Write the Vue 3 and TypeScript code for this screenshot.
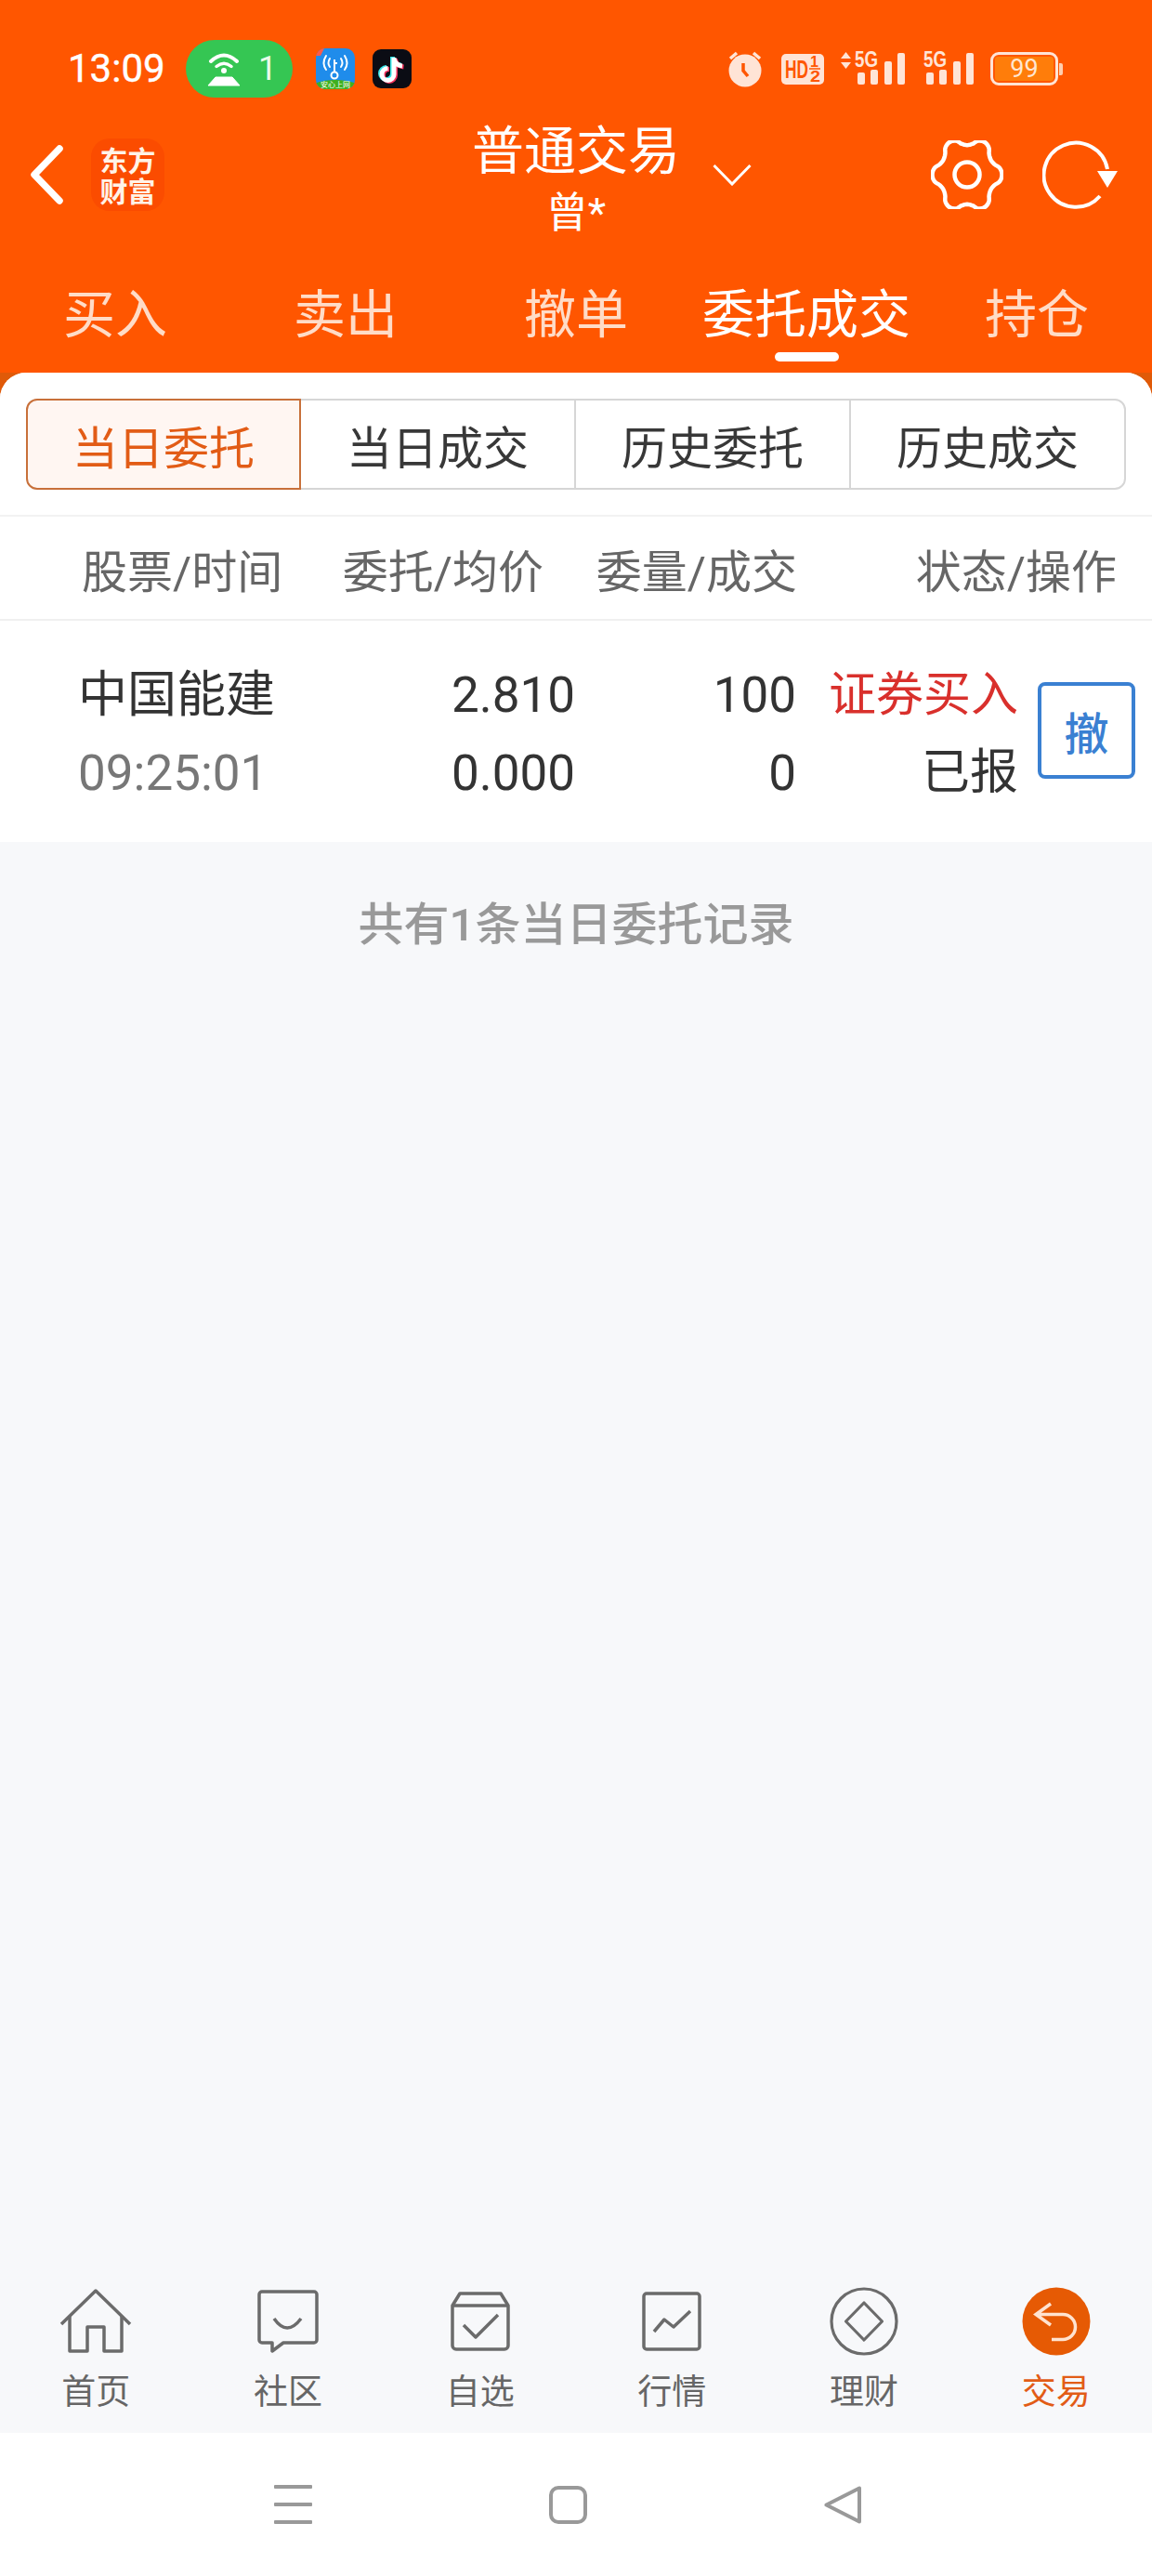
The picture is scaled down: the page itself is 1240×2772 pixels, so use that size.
<script setup lang="ts">
const topTabs = [
  { label: '买入', active: false },
  { label: '卖出', active: false },
  { label: '撤单', active: false },
  { label: '委托成交', active: true },
  { label: '持仓', active: false },
]
const segments = ['当日委托', '当日成交', '历史委托', '历史成交']
const columns = ['股票/时间', '委托/均价', '委量/成交', '状态/操作']
const bottomTabs = [
  { key: 'home', label: '首页' },
  { key: 'community', label: '社区' },
  { key: 'watch', label: '自选' },
  { key: 'market', label: '行情' },
  { key: 'wealth', label: '理财' },
  { key: 'trade', label: '交易' },
]
const signalBars = [
  { x: 3, y: 23 },
  { x: 17, y: 20 },
  { x: 32, y: 11 },
  { x: 46, y: 2 },
]

// six soft lobes, wider than a plain cosine so it reads like the app's gear
function gearPath(): string {
  const points: string[] = []
  for (let i = 0; i < 144; i++) {
    const a = (i / 144) * Math.PI * 2
    const c = Math.cos(6 * a)
    const r = 33.5 + 4 * Math.sign(c) * Math.pow(Math.abs(c), 0.7)
    points.push(`${(39 + r * Math.cos(a)).toFixed(2)} ${(37 + r * 1.08 * Math.sin(a)).toFixed(2)}`)
  }
  return `M${points.join('L')}Z`
}
const gear = gearPath()
</script>

<template>
  <div class="phone">
    <header class="head">
      <div class="statusbar">
        <span class="time">13:09</span>
        <span class="hotspot">
          <svg width="36" height="37" viewBox="0 0 36 37" fill="none">
            <path d="M4 10Q18-3 32 10" stroke="#fff" stroke-width="4" stroke-linecap="round" />
            <path d="M10 15.500Q18 9 26 15.500" stroke="#fff" stroke-width="3.500" stroke-linecap="round" />
            <circle cx="18" cy="20" r="3" fill="#fff" />
            <path d="M9 27H27L35 36H1Z" fill="#fff" stroke="#fff" stroke-linejoin="round" />
          </svg>
          <span class="hotspot-num">1</span>
        </span>
        <svg class="app-wifi" width="42" height="44" viewBox="0 0 42 44" fill="none">
          <defs>
            <clipPath id="appclip"><rect width="42" height="44" rx="10" /></clipPath>
          </defs>
          <g clip-path="url(#appclip)">
            <rect width="42" height="44" fill="#1f8ceb" />
            <ellipse cx="21" cy="44" rx="28" ry="10" fill="#3fb01e" />
            <path d="M0 0H9L5 8H0Z" fill="#ff5a4a" />
          </g>
          <path d="M11 8Q6 16 11 23M31 8Q36 16 31 23M15 11Q12 16 15 20M27 11Q30 16 27 20" stroke="#fff" stroke-width="2" stroke-linecap="round" />
          <circle cx="20" cy="29" r="3.500" stroke="#fff" stroke-width="2" />
          <path d="M20 25V12M20 16H23" stroke="#fff" stroke-width="2" />
          <text x="21" y="42" text-anchor="middle" class="app-wifi-text">安心上网</text>
        </svg>
        <svg class="tiktok" width="42" height="42" viewBox="0 0 42 42" fill="none">
          <rect width="42" height="42" rx="9" fill="#0b0c14" />
          <g stroke-width="5">
            <path d="M21.500 8V26A6.500 6.500 0 1 1 15 19.500M21.500 9C22.500 13.500 25.500 16.500 30.500 17" stroke="#35e3e6" />
            <path d="M24.500 10V28A6.500 6.500 0 1 1 18 21.500M24.500 11C25.500 15.500 28.500 18.500 33.500 19" stroke="#f5325d" />
            <path d="M23 9V27A6.500 6.500 0 1 1 16.500 20.500M23 10C24 14.500 27 17.500 32 18" stroke="#fff" />
          </g>
        </svg>

        <div class="status-right">
          <svg width="38" height="39" viewBox="0 0 38 39" fill="none">
            <circle cx="19" cy="21" r="17.500" fill="#ffe4d6" />
            <path d="M3 8L10 2M35 8L28 2" stroke="#ffe4d6" stroke-width="3.500" />
            <path d="M17 13V21L22 27" stroke="#ff5600" stroke-width="3.500" />
          </svg>
          <svg class="hd" width="46" height="33" viewBox="0 0 46 33">
            <rect width="46" height="33" rx="5" fill="#ffe4d6" />
            <text x="4" y="26" textLength="25" lengthAdjust="spacingAndGlyphs" class="hd-big">HD</text>
            <text x="31" y="14" textLength="9" lengthAdjust="spacingAndGlyphs" class="hd-small">1</text>
            <text x="31" y="30" textLength="11" lengthAdjust="spacingAndGlyphs" class="hd-small">2</text>
            <path d="M30 16H42" stroke="#ff5600" stroke-width="1.500" />
          </svg>
          <svg class="updown" width="11" height="18" viewBox="0 0 11 18">
            <path d="M5.500 0L11 7H0ZM5.500 18L0 11H11Z" fill="#ffe4d6" />
          </svg>
          <svg v-for="n in 2" :key="n" class="signal" :class="{ 'signal--second': n === 2 }" width="54" height="37" viewBox="0 0 54 37">
            <text x="0" y="17" textLength="25" lengthAdjust="spacingAndGlyphs" class="sig-text">5G</text>
            <rect v-for="bar in signalBars" :key="bar.x" :x="bar.x" :y="bar.y" width="8" :height="36 - bar.y" rx="2" fill="#ffe4d6" />
          </svg>
          <div class="battery">
            <div class="battery-fill">99</div>
          </div>
          <div class="battery-tip"></div>
        </div>
      </div>

      <div class="topbar">
        <div class="top-left">
          <svg width="36" height="64" viewBox="0 0 36 64" fill="none">
            <path d="M32 4L5 32L32 60" stroke="#fff" stroke-width="7.500" stroke-linecap="round" stroke-linejoin="round" />
          </svg>
          <div class="logo">东方<br />财富</div>
        </div>
        <div class="top-title">
          <div class="title">普通交易</div>
          <div class="subtitle">曾*</div>
        </div>
        <div class="top-right">
          <svg class="caret" width="42" height="24" viewBox="0 0 42 24" fill="none">
            <path d="M1.500 2L21 22L40.500 2" stroke="#fff" stroke-width="3" />
          </svg>
          <svg class="gear" width="78" height="74" viewBox="0 0 78 74" fill="none">
            <path :d="gear" stroke="#fff" stroke-width="4.500" stroke-linejoin="round" />
            <circle cx="39" cy="37" r="13.500" stroke="#fff" stroke-width="4.500" />
          </svg>
          <svg class="refresh" width="82" height="74" viewBox="0 0 82 74" fill="none">
            <path d="M62 60A34.500 34.500 0 1 1 70 31" stroke="#fff" stroke-width="4" />
            <path d="M59 33H81L70 51Z" fill="#fff" />
          </svg>
        </div>
      </div>

      <nav class="tabs">
        <div v-for="tab in topTabs" :key="tab.label" class="tab" :class="{ 'tab--active': tab.active }">
          <div class="tab-label">{{ tab.label }}</div>
          <div v-if="tab.active" class="tab-bar"></div>
        </div>
      </nav>
    </header>

    <main class="panel">
      <div class="seg-wrap">
        <div class="seg">
          <div v-for="(seg, i) in segments" :key="seg" class="seg-item" :class="{ 'seg-item--active': i === 0 }">{{ seg }}</div>
        </div>
      </div>

      <div class="thead">
        <div v-for="col in columns" :key="col" class="thead-cell">{{ col }}</div>
      </div>

      <div class="row">
        <div class="cell cell--name">中国能建</div>
        <div class="cell">2.810</div>
        <div class="cell">100</div>
        <div class="cell cell--buy">证券买入</div>
        <button type="button" class="cancel">撤</button>
        <div class="cell cell--time">09:25:01</div>
        <div class="cell">0.000</div>
        <div class="cell">0</div>
        <div class="cell cell--state">已报</div>
      </div>

      <p class="note">共有1条当日委托记录</p>

      <div class="tabbar">
        <div v-for="item in bottomTabs" :key="item.key" class="tabbar-item" :class="{ 'tabbar-item--active': item.key === 'trade' }">
          <div class="tabbar-icon">
            <svg v-if="item.key === 'home'" width="78" height="70" viewBox="0 0 78 70" fill="none" stroke="#6b6b6b" stroke-width="3.500" stroke-linejoin="round">
              <path d="M2 38L39 2L76 38" />
              <path d="M11 29V67H30V41H48V67H67V29" />
            </svg>
            <svg v-else-if="item.key === 'community'" width="66" height="68" viewBox="0 0 66 68" fill="none" stroke="#6b6b6b" stroke-width="3.500" stroke-linejoin="round">
              <path d="M5 2H61A3 3 0 0 1 64 5V54A3 3 0 0 1 61 57H28L16 66V57H5A3 3 0 0 1 2 54V5A3 3 0 0 1 5 2Z" />
              <path d="M18 31Q32 51 47 31" />
            </svg>
            <svg v-else-if="item.key === 'watch'" width="64" height="64" viewBox="0 0 64 64" fill="none" stroke="#6b6b6b" stroke-width="3.500" stroke-linejoin="round">
              <path d="M2 15L10 2H54L62 15V58A4 4 0 0 1 58 62H6A4 4 0 0 1 2 58Z" />
              <path d="M2 15H62" />
              <path d="M14 36L27 49L51 25" />
            </svg>
            <svg v-else-if="item.key === 'market'" width="64" height="64" viewBox="0 0 64 64" fill="none" stroke="#6b6b6b" stroke-width="3.500" stroke-linejoin="round">
              <rect x="2" y="2" width="60" height="60" rx="3" />
              <path d="M13 43L24 30L34 38L52 21" />
            </svg>
            <svg v-else-if="item.key === 'wealth'" width="74" height="74" viewBox="0 0 74 74" fill="none" stroke="#6b6b6b" stroke-width="3.200" stroke-linejoin="round">
              <circle cx="37" cy="37" r="35" />
              <path d="M37 17L56.500 37L37 57L17.500 37Z" />
            </svg>
            <svg v-else width="74" height="74" viewBox="0 0 74 74" fill="none" stroke="#ffe3d0" stroke-width="3.500">
              <circle cx="37" cy="37" r="36.500" fill="#e65a04" stroke="none" />
              <path d="M31 18L15 29.500L31 41M15 29.500H44A13.500 13.500 0 0 1 44 56.500H32" />
            </svg>
          </div>
          <div class="tabbar-label">{{ item.label }}</div>
        </div>
      </div>
    </main>

    <footer class="navbar">
      <div class="nav-menu"><span></span><span></span><span></span></div>
      <div class="nav-home"></div>
      <svg width="40" height="41" viewBox="0 0 40 41" fill="none">
        <path d="M38 2.500V38.500L2.500 20.500Z" stroke="#999" stroke-width="4" stroke-linejoin="round" />
      </svg>
    </footer>
  </div>
</template>

<style>
html,
body {
  margin: 0;
  background: #f7f8fa;
}
</style>

<style scoped>
.phone {
  width: 1240px;
  height: 2772px;
  display: flex;
  flex-direction: column;
  overflow: hidden;
  font-family: Roboto, "Noto Sans CJK SC", sans-serif;
  background: #e05a08;
}

.head {
  background: #ff5600;
  flex: 0 0 auto;
}

.statusbar {
  height: 130px;
  box-sizing: border-box;
  padding: 18px 0 0 73px;
  display: flex;
  align-items: center;
}

.time {
  width: 127px;
  color: #fff;
  font-size: 42px;
  font-weight: 400;
  -webkit-text-stroke: 0.4px #fff;
  line-height: 50px;
}

.hotspot {
  width: 115px;
  height: 62px;
  box-sizing: border-box;
  padding-left: 23px;
  display: flex;
  align-items: center;
  gap: 19px;
  background: #35c653;
  border-radius: 31px;
}

.hotspot-num {
  color: #eafbe9;
  font-size: 36px;
  line-height: 40px;
}

.app-wifi {
  margin-left: 25px;
}

.app-wifi-text {
  fill: #fff;
  font-size: 8px;
  font-family: "Noto Sans CJK SC", sans-serif;
}

.tiktok {
  margin-left: 19px;
}

.status-right {
  margin-left: 340px;
  display: flex;
  align-items: center;
}

.hd {
  margin-left: 20px;
}

.hd-big {
  fill: #ff5600;
  font-size: 27px;
  font-weight: 700;
  font-family: "Liberation Sans", sans-serif;
}

.hd-small {
  fill: #ff5600;
  font-size: 16px;
  font-weight: 700;
  font-family: "Liberation Sans", sans-serif;
}

.updown {
  margin: -19px 4px 0 18px;
}

.signal {
  margin-top: -1px;
  overflow: visible;
}

.signal--second {
  margin-left: 20px;
}

.sig-text {
  fill: #ffe4d6;
  font-size: 23px;
  font-weight: 700;
  font-family: "Liberation Sans", sans-serif;
}

.battery {
  width: 73px;
  height: 36px;
  margin-left: 18px;
  box-sizing: border-box;
  padding: 2px;
  border: 3px solid #ffe4d6;
  border-radius: 9px;
}

.battery-fill {
  height: 100%;
  color: #ffe6d0;
  font-size: 27px;
  line-height: 26px;
  text-align: center;
  background: #ff7d0a;
  border-radius: 3px;
}

.battery-tip {
  width: 4px;
  height: 13px;
  margin-left: 1px;
  background: #ffcfb0;
  border-radius: 0 2px 2px 0;
}

.topbar {
  height: 140px;
  display: grid;
  grid-template-columns: 1fr 216px 1fr;
  box-sizing: border-box;
}

.top-left,
.top-right {
  height: 78px;
  margin-top: 19px;
  display: flex;
  align-items: center;
}

.top-left {
  padding-left: 32px;
}

.logo {
  width: 79px;
  height: 78px;
  margin-left: 30px;
  color: #fff3e8;
  font-size: 30px;
  font-weight: 700;
  line-height: 33px;
  text-align: center;
  box-sizing: border-box;
  padding-top: 6px;
  background: #fb4c00;
  border-radius: 20px;
  font-family: "Noto Sans CJK SC", sans-serif;
}

.top-title {
  color: #fff;
  text-align: center;
}

.title {
  margin-top: 3px;
  margin-left: -4px;
  margin-right: -4px;
  font-size: 56px;
  line-height: 60px;
  white-space: nowrap;
}

.subtitle {
  margin-top: 12px;
  font-size: 45px;
  line-height: 50px;
}

.caret {
  margin-left: 39px;
}

.gear {
  margin-left: 193px;
}

.refresh {
  margin-left: 42px;
}

.tabs {
  height: 131px;
  display: flex;
}

.tab {
  flex: 1;
  padding-top: 39px;
  color: #ffdcc7;
  font-size: 56px;
  line-height: 60px;
  text-align: center;
}

.tab--active {
  color: #fff;
}

.tab-bar {
  width: 69px;
  height: 10px;
  margin: 10px auto 0;
  background: #fff;
  border-radius: 5px;
}

.panel {
  flex: 1;
  display: flex;
  flex-direction: column;
  background: #f7f8fa;
  border-radius: 28px 28px 0 0;
  overflow: hidden;
}

.seg-wrap {
  padding: 28px 28px 27px;
  background: #fff;
}

.seg {
  display: grid;
  grid-template-columns: repeat(4, 296px);
  height: 98px;
}

.seg-item {
  display: flex;
  align-items: center;
  justify-content: center;
  margin-left: -2px;
  color: #383838;
  font-size: 49px;
  border: 2px solid #d6d6d6;
  background: #fff;
}

.seg-item:first-child {
  margin-left: 0;
  border-radius: 12px 0 0 12px;
}

.seg-item:last-child {
  border-radius: 0 12px 12px 0;
}

.seg-item--active {
  z-index: 1;
  color: #e25c16;
  background: #fff6f2;
  border-color: #c8703a;
}

.thead {
  height: 114px;
  box-sizing: border-box;
  padding: 0 38px 0 88px;
  display: grid;
  grid-template-columns: 214px 283px 273px 344px;
  align-items: center;
  color: #666;
  font-size: 49px;
  background: #fff;
  border-top: 2px solid #f2f2f2;
  border-bottom: 2px solid #f0f0f0;
}

.thead-cell {
  text-align: right;
  white-space: nowrap;
}

.row {
  height: 238px;
  box-sizing: border-box;
  padding: 38px 18px 32px 84px;
  display: grid;
  grid-template-columns: 316px 219px 238px 239px 126px;
  grid-auto-rows: 84px;
  background: #fff;
}

.cell {
  color: #333;
  font-size: 53px;
  line-height: 84px;
  text-align: right;
  white-space: nowrap;
}

.cell--name {
  text-align: left;
}

.cell--time {
  color: #777;
  text-align: left;
}

.cell--buy {
  color: #d9302c;
  font-size: 51px;
}

.cell--state {
  font-size: 52px;
}

.cancel {
  grid-row: span 2;
  justify-self: end;
  align-self: center;
  width: 105px;
  height: 104px;
  margin-bottom: 8px;
  padding: 0;
  color: #3a80d2;
  font: inherit;
  font-size: 48px;
  font-weight: 500;
  background: #fff;
  border: 4px solid #3a80d2;
  border-radius: 8px;
}

.note {
  margin: 60px 0 0;
  color: #999;
  font-size: 49px;
  font-weight: 500;
  line-height: 60px;
  text-align: center;
}

.tabbar {
  margin-top: auto;
  height: 167px;
  box-sizing: border-box;
  padding-top: 10px;
  display: grid;
  grid-template-columns: repeat(6, 1fr);
}

.tabbar-item {
  color: #666;
  text-align: center;
}

.tabbar-item--active {
  color: #e25c16;
}

.tabbar-icon {
  height: 74px;
  display: flex;
  align-items: center;
  justify-content: center;
}

.tabbar-label {
  margin-top: 18px;
  font-size: 37px;
  line-height: 44px;
}

.navbar {
  flex: 0 0 auto;
  height: 154px;
  box-sizing: border-box;
  padding-left: 295px;
  display: flex;
  align-items: center;
  gap: 255px;
  background: #fff;
}

.nav-menu {
  width: 41px;
  display: flex;
  flex-direction: column;
  gap: 15px;
}

.nav-menu span {
  height: 4px;
  background: #999;
  border-radius: 1px;
}

.nav-home {
  width: 41px;
  height: 41px;
  box-sizing: border-box;
  border: 4px solid #999;
  border-radius: 10px;
}
</style>
